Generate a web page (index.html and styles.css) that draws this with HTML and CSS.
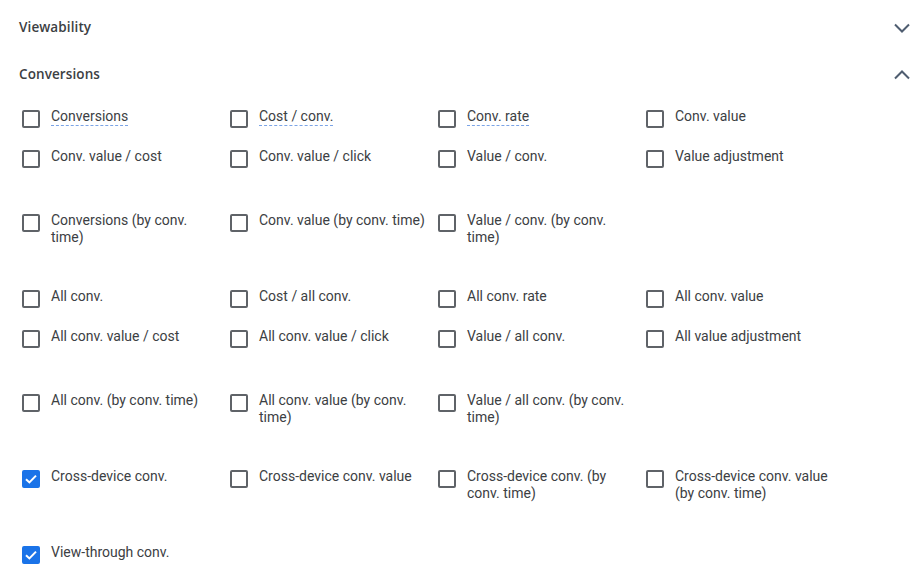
FILE: index.html
```html
<!DOCTYPE html>
<html>
<head>
<meta charset="utf-8">
<link rel="stylesheet" href="styles.css">
</head>
<body>
<div class="panel">
  <div class="section-header">
    <span class="section-title">Viewability</span>
    <svg class="chevron" width="16" height="10" viewBox="0 0 16 10"><polyline points="1,1.5 8,8.5 15,1.5" fill="none" stroke="#4f5d70" stroke-width="2"/></svg>
  </div>
  <div class="section-header">
    <span class="section-title">Conversions</span>
    <svg class="chevron" width="16" height="10" viewBox="0 0 16 10"><polyline points="1,8.5 8,1.5 15,8.5" fill="none" stroke="#4f5d70" stroke-width="2"/></svg>
  </div>
  <div class="grid">
    <div class="row h40">
      <div class="item"><span class="box"></span><span class="label"><span class="dotted">Conversions</span></span></div>
      <div class="item"><span class="box"></span><span class="label"><span class="dotted">Cost / conv.</span></span></div>
      <div class="item"><span class="box"></span><span class="label"><span class="dotted">Conv. rate</span></span></div>
      <div class="item"><span class="box"></span><span class="label">Conv. value</span></div>
    </div>
    <div class="row h64">
      <div class="item"><span class="box"></span><span class="label">Conv. value / cost</span></div>
      <div class="item"><span class="box"></span><span class="label">Conv. value / click</span></div>
      <div class="item"><span class="box"></span><span class="label">Value / conv.</span></div>
      <div class="item"><span class="box"></span><span class="label">Value adjustment</span></div>
    </div>
    <div class="row h76">
      <div class="item"><span class="box"></span><span class="label">Conversions (by conv. time)</span></div>
      <div class="item"><span class="box"></span><span class="label">Conv. value (by conv. time)</span></div>
      <div class="item"><span class="box"></span><span class="label">Value / conv. (by conv. time)</span></div>
    </div>
    <div class="row h40">
      <div class="item"><span class="box"></span><span class="label">All conv.</span></div>
      <div class="item"><span class="box"></span><span class="label">Cost / all conv.</span></div>
      <div class="item"><span class="box"></span><span class="label">All conv. rate</span></div>
      <div class="item"><span class="box"></span><span class="label">All conv. value</span></div>
    </div>
    <div class="row h64">
      <div class="item"><span class="box"></span><span class="label">All conv. value / cost</span></div>
      <div class="item"><span class="box"></span><span class="label">All conv. value / click</span></div>
      <div class="item"><span class="box"></span><span class="label">Value / all conv.</span></div>
      <div class="item"><span class="box"></span><span class="label">All value adjustment</span></div>
    </div>
    <div class="row h76">
      <div class="item"><span class="box"></span><span class="label">All conv. (by conv. time)</span></div>
      <div class="item"><span class="box"></span><span class="label">All conv. value (by conv. time)</span></div>
      <div class="item"><span class="box"></span><span class="label">Value / all conv. (by conv. time)</span></div>
    </div>
    <div class="row h76">
      <div class="item"><span class="box checked"><svg width="14" height="14" viewBox="0 0 14 14"><polyline points="2,7.2 5.4,10.4 12,3.6" fill="none" stroke="#fff" stroke-width="2"/></svg></span><span class="label">Cross-device conv.</span></div>
      <div class="item"><span class="box"></span><span class="label">Cross-device conv. value</span></div>
      <div class="item"><span class="box"></span><span class="label">Cross-device conv. (by conv. time)</span></div>
      <div class="item"><span class="box"></span><span class="label">Cross-device conv. value (by conv. time)</span></div>
    </div>
    <div class="row h40">
      <div class="item"><span class="box checked"><svg width="14" height="14" viewBox="0 0 14 14"><polyline points="2,7.2 5.4,10.4 12,3.6" fill="none" stroke="#fff" stroke-width="2"/></svg></span><span class="label">View-through conv.</span></div>
    </div>
  </div>
</div>
</body>
</html>
```
FILE: styles.css
```css
html, body {
  margin: 0;
  padding: 0;
  background: #fff;
}
body {
  font-family: Roboto, "Liberation Sans", Arial, sans-serif;
  color: #3c4043;
  width: 923px;
  height: 570px;
  overflow: hidden;
}
.panel {
  padding: 3px 12px 0 19px;
}
.section-header {
  height: 47px;
  display: flex;
  align-items: center;
  justify-content: space-between;
}
.section-title {
  font-family: "Open Sans", Roboto, sans-serif;
  font-weight: 600;
  font-size: 13.5px;
  color: #3c4043;
  letter-spacing: 0.1px;
}
.chevron {
  display: block;
  margin-right: 1px;
  margin-top: 2px;
}
.grid {
  padding-top: 11px;
  padding-left: 3px;
}
.row {
  display: flex;
}
.h40 { height: 40px; }
.h64 { height: 64px; }
.h76 { height: 76px; }
.item {
  width: 208px;
  display: flex;
  align-items: flex-start;
  gap: 11px;
}
.box {
  flex: none;
  width: 14px;
  height: 14px;
  border: 2px solid #5f6368;
  border-radius: 2px;
  margin-top: 2px;
  display: flex;
  align-items: center;
  justify-content: center;
}
.box.checked {
  background: #1a73e8;
  border-color: #1a73e8;
}
.box svg {
  display: block;
}
.label {
  font-size: 14px;
  line-height: 17px;
  max-width: 168px;
  color: #3c4043;
}
.dotted {
  border-bottom: 1px dashed #7ba4e6;
  padding-bottom: 1px;
}
```
